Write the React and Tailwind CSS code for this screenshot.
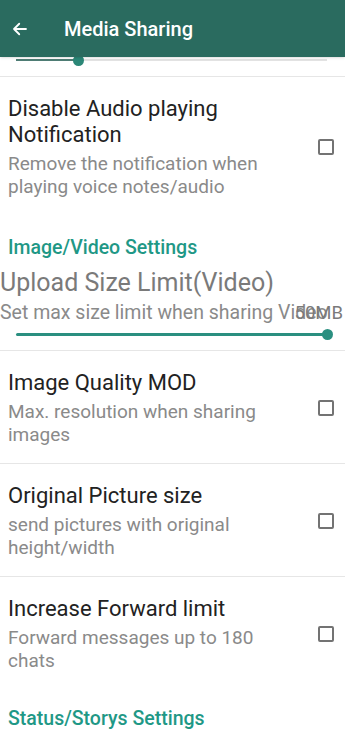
import React from "react";

const items = [
  {
    title: "Image Quality MOD",
    sub: "Max. resolution when sharing images",
  },
  {
    title: "Original Picture size",
    sub: "send pictures with original height/width",
  },
  {
    title: "Increase Forward limit",
    sub: "Forward messages up to 180 chats",
  },
];

const Checkbox = () => (
  <div className="w-4 h-4 border-2 border-[#737373] rounded-[2px] shrink-0" />
);

const CheckRow = ({ title, sub, last }) => (
  <div
    className={`flex items-center gap-6 pl-2 pr-[11px] pt-[19px] pb-[17px] ${
      last ? "" : "border-b border-[#e6e6e6]"
    }`}
  >
    <div className="flex-1">
      <div className="text-[22px] leading-[26px] text-[#222]">{title}</div>
      <div className="mt-1 text-[19px] leading-[23px] text-[#8a8a8a]">{sub}</div>
    </div>
    <Checkbox />
  </div>
);

const SectionHeader = ({ children }) => (
  <div className="px-2 text-[19.5px] leading-[22px] font-medium text-[#1f9886]">
    {children}
  </div>
);

export default function App() {
  return (
    <div
      className="w-[345px] h-[744px] overflow-hidden bg-white"
      style={{ fontFamily: "Roboto, 'Noto Sans', sans-serif" }}
    >
      {/* Toolbar */}
      <div className="relative z-10 h-[57px] bg-[#2a6b5f] flex items-center gap-[35px] pl-[11px] shadow-sm">
        <svg
          width="18"
          height="18"
          viewBox="0 0 24 24"
          fill="none"
          stroke="white"
          strokeWidth="2.4"
          strokeLinecap="round"
          strokeLinejoin="round"
        >
          <path d="M20 12H4M11 5l-7 7 7 7" />
        </svg>
        <div className="text-white text-[20px] font-medium">Media Sharing</div>
      </div>

      {/* Slider left over from the scrolled-off item */}
      <div className="h-[18px] border-b border-[#e6e6e6] pl-4 pr-[18px]">
        <div className="relative flex h-[2px] mt-[2px] bg-[#e3e3e3]">
          <div className="w-[62px] bg-[#4f7d75]" />
          <div className="absolute left-[57px] top-[-4.5px] w-[11px] h-[11px] rounded-full bg-[#2b8777]" />
        </div>
      </div>

      <CheckRow
        title="Disable Audio playing Notification"
        sub="Remove the notification when playing voice notes/audio"
        last
      />

      <div className="pt-[22px]">
        <SectionHeader>Image/Video Settings</SectionHeader>
      </div>

      {/* Upload size limit */}
      <div className="border-b border-[#e6e6e6] pb-[14px]">
        <div className="mt-[10px] text-[25px] leading-[28px] text-[#7a7a7a] whitespace-nowrap">
          Upload Size Limit(Video)
        </div>
        <div className="relative mt-[5px] text-[19.5px] leading-[22px] text-[#8a8a8a] whitespace-nowrap">
          Set max size limit when sharing Video
          <span className="absolute right-[2px] top-0 text-[18.5px] text-[#7a7a7a]">50MB</span>
        </div>
        <div className="relative ml-4 mr-[18px] mt-[9px] h-[3px] bg-[#2a8f80] rounded-full">
          <div className="absolute right-[-6px] top-[-4px] w-[11px] h-[11px] rounded-full bg-[#2a8f80]" />
        </div>
      </div>

      {items.map((it, i) => (
        <CheckRow key={it.title} {...it} last={i === items.length - 1} />
      ))}

      <div className="pt-[19px]">
        <SectionHeader>Status/Storys Settings</SectionHeader>
      </div>
    </div>
  );
}
